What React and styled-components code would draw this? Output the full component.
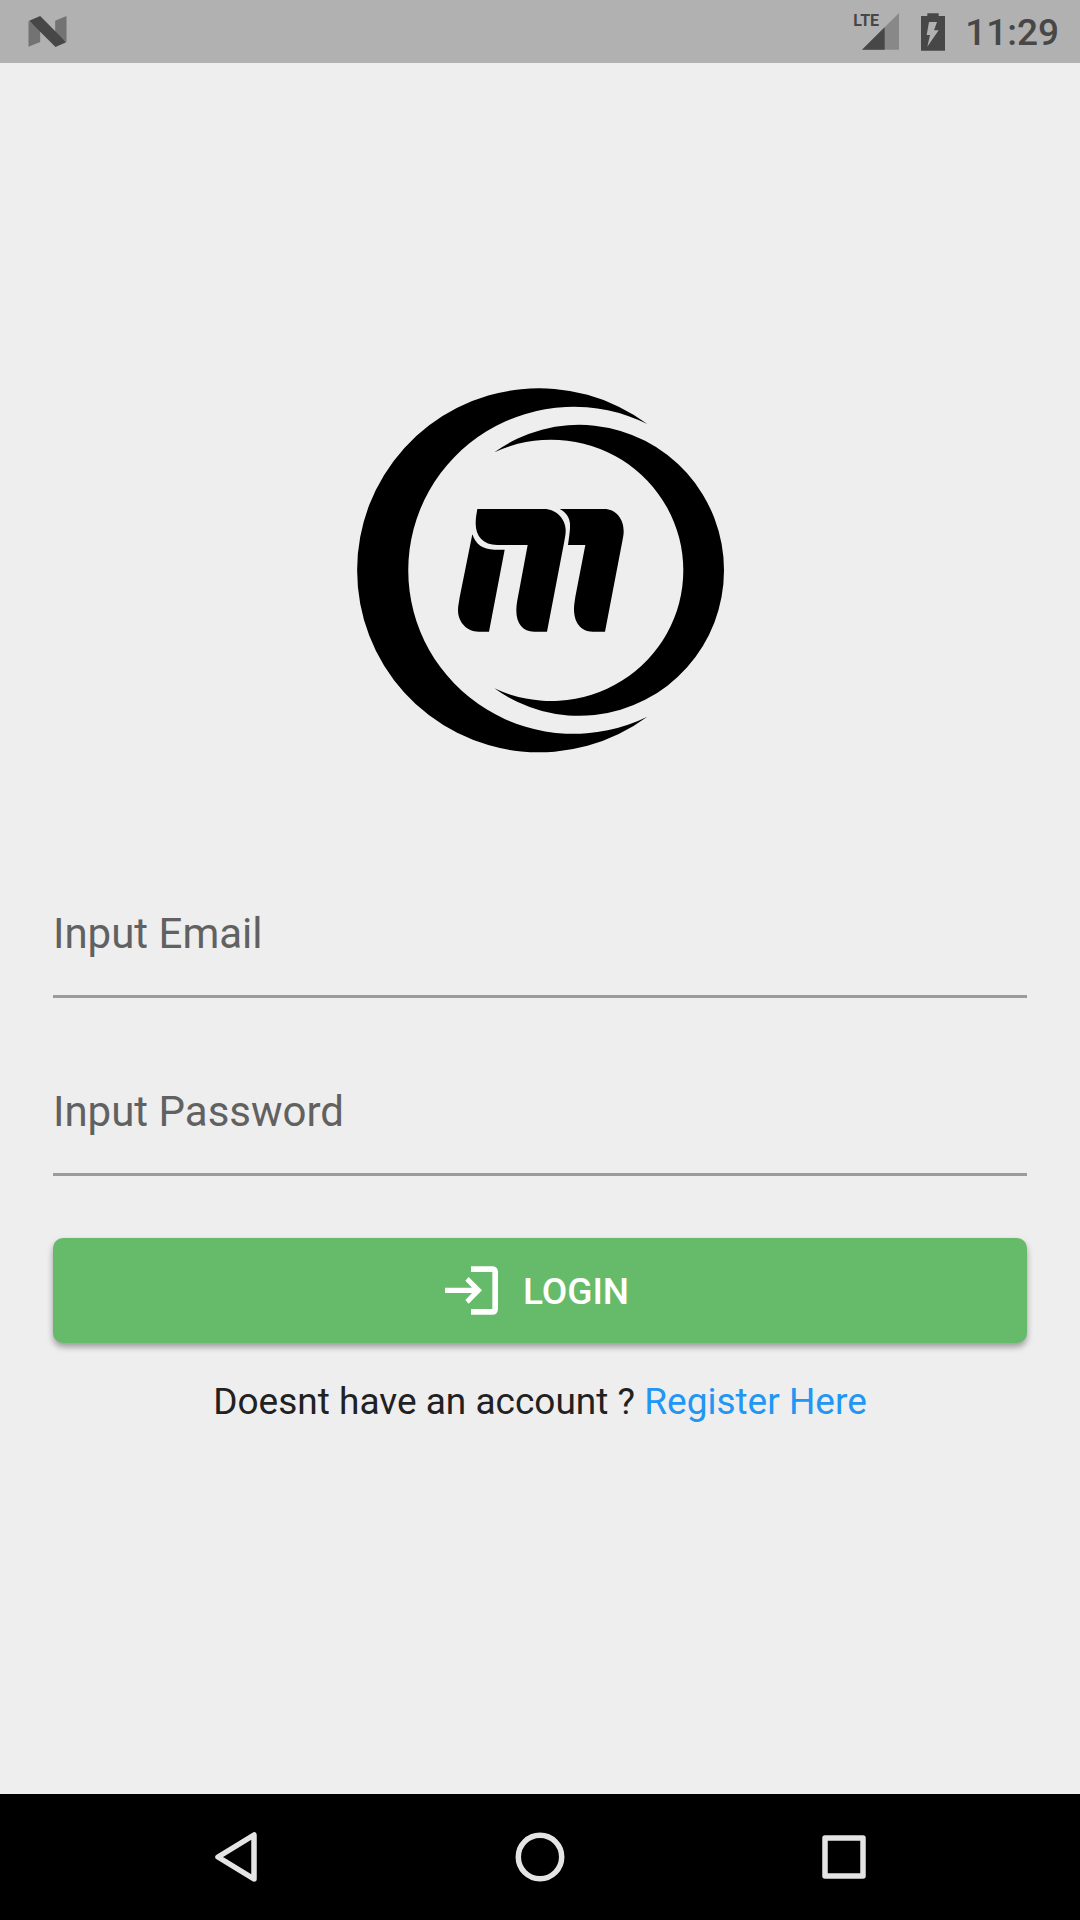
import React from 'react';
import styled, { createGlobalStyle } from 'styled-components';

const GlobalStyle = createGlobalStyle`
  *, *::before, *::after { box-sizing: border-box; }
  body {
    margin: 0;
    background: #eeeeee;
    font-family: Roboto, "Liberation Sans", sans-serif;
  }
`;

const Screen = styled.div`
  display: flex;
  flex-direction: column;
  min-height: 100vh;
`;

const StatusBar = styled.header`
  display: flex;
  align-items: center;
  justify-content: space-between;
  height: 63px;
  padding: 0 21px 0 28px;
  background: #b1b1b1;
  color: #474747;
`;

const StatusGroup = styled.div`
  display: flex;
  align-items: center;
`;

const Icon = styled.svg`
  display: block;
  flex: none;
  width: ${(p) => p.$width}px;
  height: ${(p) => p.$height}px;
`;

const Signal = styled.div`
  position: relative;
  margin-right: 22px;
`;

const NetworkType = styled.span`
  position: absolute;
  top: 0;
  right: 20px;
  font: 700 16px/16px Roboto, "Liberation Sans", sans-serif;
`;

const Clock = styled.time`
  margin-left: 20px;
  font-size: 37px;
  line-height: 44px;
  padding-top: 2px;
  font-weight: 500;
`;

const Main = styled.main`
  display: flex;
  flex: 1;
  flex-direction: column;
  align-items: center;
  padding: 307px 53px 48px;
`;

const Form = styled.form`
  display: flex;
  flex-direction: column;
  width: 100%;
  margin-top: 138px;
`;

const TextField = styled.input`
  width: 100%;
  height: 90px;
  margin-bottom: 88px;
  padding: 0 0 37px;
  border: 0;
  border-bottom: 3px solid #9a9a9a;
  border-radius: 0;
  outline: 0;
  background: transparent;
  color: #212121;
  font: 400 42px/50px Roboto, "Liberation Sans", sans-serif;

  &::placeholder {
    color: #616161;
    opacity: 1;
  }

  &:focus {
    border-bottom-color: #66bb6a;
  }

  &:last-of-type {
    margin-bottom: 62px;
  }
`;

const LoginButton = styled.button`
  display: flex;
  align-items: center;
  justify-content: center;
  gap: 25px;
  height: 105px;
  padding: 0 6px 0 0;
  border: 0;
  border-radius: 10px;
  background: #66bb6a;
  box-shadow: 0 4px 6px rgba(0, 0, 0, 0.34);
  color: #ffffff;
  font: 500 37px/44px Roboto, "Liberation Sans", sans-serif;
  cursor: pointer;
`;

const ButtonLabel = styled.span`
  padding-top: 2px;
`;

const Prompt = styled.p`
  margin: 37px 0 0;
  color: #212121;
  font-size: 37px;
  line-height: 44px;
  text-align: center;
`;

const RegisterLink = styled.a`
  color: #2196f3;
  text-decoration: none;
`;

const NavBar = styled.nav`
  display: flex;
  align-items: center;
  justify-content: center;
  gap: 184px;
  height: 126px;
  background: #000000;
`;

const NavButton = styled.button`
  display: grid;
  place-items: center;
  width: 120px;
  height: 100%;
  padding: 0;
  border: 0;
  background: none;
  cursor: pointer;
`;

const NavIcon = ({ children }) => (
  <Icon $width={60} $height={60} viewBox="0 0 60 60" fill="none" stroke="#e4e4e4" strokeWidth="5.5" strokeLinejoin="round" aria-hidden="true">
    {children}
  </Icon>
);

const NougatIcon = () => (
  <Icon $width={39} $height={31} viewBox="84 48 116 93" aria-hidden="true">
    <path d="M85 62 L120 90 V126 L85 140 Z M165 62 L199 48 V126 L165 100 Z" fill="#737373" />
    <path d="M87 62 L120 48 L198 127 L166 141 Z" fill="#474747" />
  </Icon>
);

const SignalIcon = () => (
  <Icon $width={37} $height={37} viewBox="70 38 111 111" aria-hidden="true">
    <path d="M70 148 L181 38 V148 Z" fill="#888888" />
    <path d="M70 148 L138 81 V148 Z" fill="#474747" />
  </Icon>
);

const BatteryIcon = () => (
  <Icon $width={24} $height={38} viewBox="246 36 72 114" aria-hidden="true">
    <path d="M265 37 H299 V45 H318 V149 H246 V45 H265 Z" fill="#474747" />
    <path d="M270 63 H294 L285 88 H299 L265 137 L273 102 H263 Z" fill="#b1b1b1" />
  </Icon>
);

const Logo = () => (
  <Icon $width={400} $height={400} viewBox="0 0 1200 1200" role="img" aria-label="Logo">
    <path d="M922 162 A546 546 0 1 0 922 1040 A496 490.5 0 1 1 922 162 Z" />
    <path d="M463 247 A434.7 436.5 0 1 1 463 955 A396.6 392 0 1 0 463 247 Z" />
    <path d="M412 417 H612 C650 417 678 449 677 482 C677 493 675 502 673 514 L621 785 H582 C549 785 529 760 529 722 C529 708 531 694 534 680 L563 525 H472 C430 525 407 500 407 460 C407 442 410 430 412 417 Z" />
    <path d="M397 493 C407 523 428 539 463 539 H494 L447 785 H416 C380 785 354 756 354 720 C354 708 357 697 359 682 Z" />
    <path d="M659 417 H792 C829 417 852 449 851 485 C851 494 849 503 847 514 L795 785 H758 C722 785 702 757 702 717 C702 706 704 695 706 680 L736 525 H684 C687 500 691 482 690 462 C689 442 678 427 659 417 Z" />
  </Icon>
);

const LoginIcon = () => (
  <Icon $width={53} $height={49} viewBox="132 108 159 147" aria-hidden="true">
    <path d="M132 173 H213 L193 152 L203 141 L243 181 L203 221 L193 210 L213 189 H132 Z" fill="#ffffff" />
    <path d="M210 109 H273 Q291 109 291 127 V236 Q291 254 273 254 H210 V237 H274 V126 H210 Z" fill="#ffffff" />
  </Icon>
);

export default function App() {
  return (
    <Screen>
      <GlobalStyle />
      <StatusBar>
        <NougatIcon />
        <StatusGroup>
          <Signal>
            <SignalIcon />
            <NetworkType>LTE</NetworkType>
          </Signal>
          <BatteryIcon />
          <Clock>11:29</Clock>
        </StatusGroup>
      </StatusBar>
      <Main>
        <Logo />
        <Form onSubmit={(e) => e.preventDefault()}>
          <TextField type="email" aria-label="Input Email" placeholder="Input Email" />
          <TextField type="password" aria-label="Input Password" placeholder="Input Password" />
          <LoginButton type="submit">
            <LoginIcon />
            <ButtonLabel>LOGIN</ButtonLabel>
          </LoginButton>
        </Form>
        <Prompt>
          Doesnt have an account ? <RegisterLink href="#register">Register Here</RegisterLink>
        </Prompt>
      </Main>
      <NavBar>
        <NavButton type="button" aria-label="Back">
          <NavIcon>
            <path d="M48 8 V52 L12 30 Z" />
          </NavIcon>
        </NavButton>
        <NavButton type="button" aria-label="Home">
          <NavIcon>
            <circle cx="30" cy="30" r="21.7" />
          </NavIcon>
        </NavButton>
        <NavButton type="button" aria-label="Recent apps">
          <NavIcon>
            <rect x="11" y="11" width="38" height="38" />
          </NavIcon>
        </NavButton>
      </NavBar>
    </Screen>
  );
}
